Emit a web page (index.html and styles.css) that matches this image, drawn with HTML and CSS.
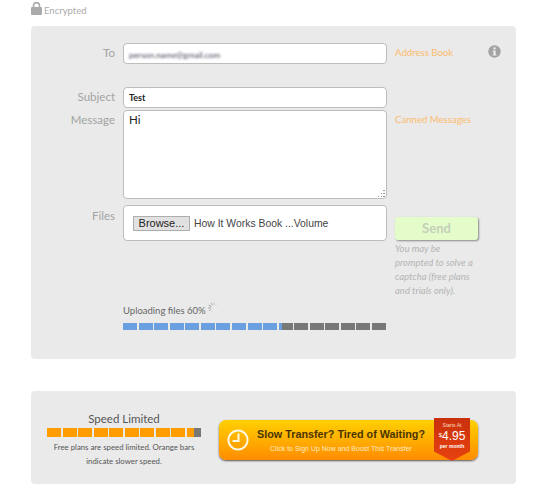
FILE: index.html
```html
<!DOCTYPE html>
<html lang="en">
<head>
  <meta charset="UTF-8" />
  <title>Send Files</title>
  <link rel="stylesheet" href="styles.css">
</head>
<body>
  <div class="encrypted">
    <svg class="lock" width="11" height="13" viewBox="0 0 11 13"><path d="M2.5 6V3.6a3 3 0 0 1 6 0V6" fill="none" stroke="#aaa" stroke-width="1.6"/><rect x="0" y="5" width="11" height="8" rx="1" fill="#aaa"/></svg>
    <span>Encrypted</span>
  </div>

  <form class="panel send-form">
    <div class="row row-to">
      <label>To</label>
      <div class="input"><span class="blurred">person.name@gmail.com</span></div>
      <a class="side-link">Address Book</a>
      <svg class="info" width="13" height="13" viewBox="0 0 13 13"><circle cx="6.5" cy="6.5" r="6.2" fill="#a3a3a3"/><rect x="5.4" y="2.4" width="2.2" height="2" fill="#eee"/><path d="M4.7 5.4h2.9v4.2h.8v1H4.7v-1h.8V6.4h-.8z" fill="#eee"/></svg>
    </div>
    <div class="row row-subject">
      <label>Subject</label>
      <div class="input subject-text">Test</div>
    </div>
    <div class="row row-message">
      <label>Message</label>
      <div class="input textarea">Hi
        <svg class="grip" width="7" height="7" viewBox="0 0 7 7"><path d="M5 0h2v1H5zM3 3h1v1H3zM5 3h2v1H5zM0 6h1v1H0zM3 6h1v1H3zM5 6h2v1H5z" fill="#999"/></svg>
      </div>
      <a class="side-link">Canned Messages</a>
    </div>
    <div class="row row-files">
      <label>Files</label>
      <div class="input file-box">
        <span class="browse">Browse...</span>
        <span class="file-name">How It Works Book ...Volume</span>
      </div>
      <div class="send-col">
        <div class="send-btn">Send</div>
        <p class="captcha">You may be prompted to solve a captcha (free plans and trials only).</p>
      </div>
    </div>
    <div class="progress-wrap">
      <div class="progress-label">Uploading files 60%
        <svg class="spinner" width="12" height="12" viewBox="0 0 12 12" fill="none" stroke-width="1"><path d="M6 0v3" stroke="#ccc"/><path d="M9 1l-1.5 2.4" stroke="#ddd"/><path d="M11.2 3.2L8.8 4.6" stroke="#e4e4e4"/><path d="M12 6H9" stroke="#eee"/><path d="M3 1l1.5 2.4" stroke="#aaa"/><path d="M.8 3.2l2.4 1.4" stroke="#999"/><path d="M0 6h3" stroke="#aaa"/><path d="M.8 8.8l2.4-1.4" stroke="#bbb"/><path d="M3 11l1.5-2.4" stroke="#ddd"/></svg>
      </div>
      <div class="bars">
        <i class="blue"></i><i class="blue"></i><i class="blue"></i><i class="blue"></i><i class="blue"></i>
        <i class="blue"></i><i class="blue"></i><i class="blue"></i><i class="blue"></i><i class="blue"></i>
        <i class="grey edge"></i><i class="grey"></i><i class="grey"></i><i class="grey"></i>
        <i class="grey"></i><i class="grey"></i><i class="grey"></i>
      </div>
    </div>
  </form>

  <div class="panel upsell">
    <div class="speed">
      <div class="speed-title">Speed Limited</div>
      <div class="speed-bars">
        <i></i><i></i><i></i><i></i><i></i><i></i><i></i><i></i><i></i><i class="last"></i>
      </div>
      <p>Free plans are speed limited. Orange bars indicate slower speed.</p>
    </div>
    <div class="boost">
      <svg class="clock" width="22" height="22" viewBox="0 0 22 22" fill="none" stroke="#fff8e0" stroke-width="2"><circle cx="11" cy="11" r="9.6"/><path d="M11.5 4.5V12H5.5"/></svg>
      <div class="boost-text">
        <div class="boost-title">Slow Transfer? Tired of Waiting?</div>
        <div class="boost-sub">Click to Sign Up Now and Boost This Transfer</div>
      </div>
      <div class="ribbon">
        <span class="r-top">Starts At</span>
        <span class="r-price"><small>$</small>4.95</span>
        <span class="r-top r-bold">per month</span>
      </div>
    </div>
  </div>
</body>
</html>
```

FILE: styles.css
```css
html, body {
  margin: 0;
  padding: 0;
  background: #fff;
  font-family: 'Lato', 'Open Sans', sans-serif;
  overflow: hidden;
}

body {
  padding: 2px 25px 0 31px;
}

.encrypted {
  display: flex;
  gap: 2px;
  height: 24px;
  align-items: flex-start;
  color: #aaa;
  font-size: 9.5px;
}

.encrypted span {
  margin-top: 3px;
}

.panel {
  background: #eaeaea;
  border-radius: 4px;
}

.send-form {
  height: 333px;
  box-sizing: border-box;
  padding-top: 17px;
  display: flex;
  flex-direction: column;
}

.row {
  display: grid;
  grid-template-columns: 84px 264px 1fr;
  column-gap: 8px;
  position: relative;
}

.row label {
  text-align: right;
  color: #a3a3a3;
  font-size: 11.5px;
  line-height: 20px;
}

.input {
  background: #fff;
  border: 1px solid #bdbdbd;
  border-radius: 4px;
  box-sizing: border-box;
  height: 21px;
  padding: 0 5px;
  font-size: 11px;
  line-height: 19px;
  color: #222;
}

.side-link {
  color: #fbbc6e;
  font-size: 9.6px;
  line-height: 20px;
}

.blurred {
  filter: blur(1.3px);
  display: inline-block;
  color: #445;
  font-size: 8.4px;
}

.info {
  position: absolute;
  left: 457px;
  top: 2px;
}

.row-subject {
  margin-top: 23px;
}

.subject-text {
  font-size: 9px;
  font-weight: 700;
}

.row-message {
  margin-top: 2px;
}

.textarea {
  height: 89px;
  position: relative;
  font-size: 11.5px;
  line-height: 18px;
}

.grip {
  position: absolute;
  right: 1px;
  bottom: 1px;
}

.row-files {
  margin-top: 6px;
}

.row-files label {
  line-height: 21px;
}

.file-box {
  height: 36px;
  display: flex;
  align-items: center;
  gap: 4px;
  padding: 0 9px;
  font-family: 'Liberation Sans', sans-serif;
  font-size: 10.4px;
  color: #444;
}

.browse {
  background: #e1e1e1;
  border: 1px solid #adadad;
  box-sizing: border-box;
  width: 57px;
  height: 15px;
  line-height: 13px;
  text-align: center;
  color: #222;
  font-size: 11px;
}

.send-col {
  margin: 12px 0 0;
}

.send-btn {
  width: 83px;
  height: 23px;
  background: #e4fcc9;
  border-radius: 3px;
  box-shadow: 1px 1px 2px #888;
  color: #c4cfb9;
  font-size: 13px;
  font-weight: 700;
  line-height: 23px;
  text-align: center;
}

.captcha {
  margin: 2px 0 0;
  width: 84px;
  color: #b5b5b5;
  font-size: 9.5px;
  font-style: italic;
  line-height: 14px;
}

.progress-wrap {
  margin: 5px 0 0 92px;
  width: 263px;
}

.progress-label {
  color: #666;
  font-size: 9.5px;
  display: flex;
  align-items: flex-start;
  gap: 2px;
  height: 15px;
  line-height: 15px;
}

.spinner {
  margin-top: -1px;
}

.bars {
  display: flex;
  justify-content: space-between;
  margin-top: 5px;
}

.bars i {
  width: 14px;
  height: 7px;
  background: #6a9fe0;
}

.bars .grey {
  background: #787878;
}

.bars .edge {
  background: linear-gradient(to right, #6a9fe0 3px, #787878 3px);
}

.upsell {
  margin-top: 32px;
  height: 93px;
  display: flex;
  align-items: flex-start;
}

.speed {
  width: 154px;
  margin: 21px 0 0 16px;
  text-align: center;
  color: #555;
}

.speed-title {
  font-size: 11.5px;
  line-height: 13px;
}

.speed-bars {
  display: flex;
  justify-content: space-between;
  margin-top: 3px;
}

.speed-bars i {
  width: 14px;
  height: 9px;
  background: #ff9d00;
}

.speed-bars .last {
  background: linear-gradient(to right, #ff9d00 7px, #777 7px);
}

.speed p {
  margin: 4px -4px 0;
  font-size: 7.8px;
  line-height: 13.5px;
}

.boost {
  width: 259px;
  height: 40px;
  margin: 29px 0 0 18px;
  box-sizing: border-box;
  border-radius: 7px;
  background: linear-gradient(#ffd000, #ff8c00);
  box-shadow: 0 1px 2px #555;
  display: flex;
  align-items: center;
  position: relative;
  padding-left: 8px;
}

.clock {
  flex: none;
}

.boost-text {
  width: 176px;
  margin-left: 4px;
  text-align: center;
  font-family: 'Liberation Sans', sans-serif;
  white-space: nowrap;
}

.boost-title {
  color: #4a3500;
  font-size: 10.8px;
  font-weight: 700;
  line-height: 14px;
}

.boost-sub {
  color: #ffe9c0;
  font-size: 7px;
  line-height: 10px;
  margin-top: 3px;
}

.ribbon {
  position: absolute;
  left: 215px;
  top: -2px;
  width: 36px;
  height: 43px;
  background: linear-gradient(#c9300c, #e8420f);
  clip-path: polygon(0 0, 100% 0, 100% 78%, 50% 100%, 0 78%);
  display: flex;
  flex-direction: column;
  align-items: center;
  color: #fff;
  font-family: 'Liberation Sans', sans-serif;
  padding-top: 4px;
  box-sizing: border-box;
}

.r-top {
  font-size: 5px;
  line-height: 7px;
  color: #ffdcc0;
}

.r-bold {
  font-weight: 700;
  color: #fff;
}

.r-price {
  font-size: 12px;
  line-height: 13px;
}

.r-price small {
  font-size: 6px;
  vertical-align: 3px;
}
```
